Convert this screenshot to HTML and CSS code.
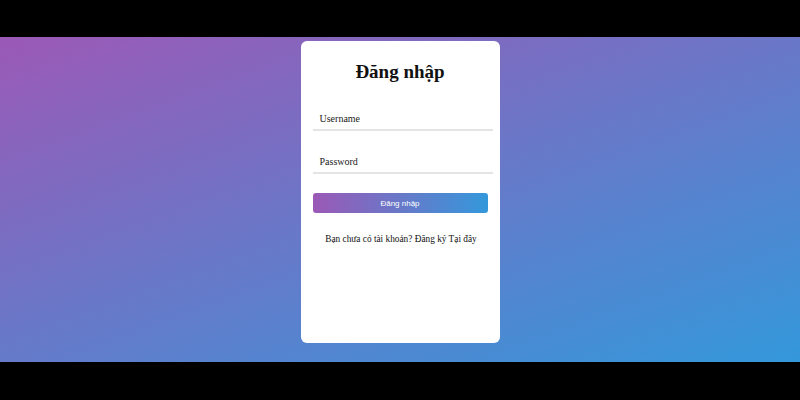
FILE: index.html
```html
<!DOCTYPE html>
<html lang="vi">
<head>
<meta charset="utf-8">
<title>Đăng nhập</title>
<link rel="stylesheet" href="styles.css">
</head>
<body>
<div class="frame">
  <div class="stage">
    <div class="card">
      <h1 class="title">Đăng nhập</h1>
      <div class="field"><span class="label">Username</span></div>
      <div class="field"><span class="label">Password</span></div>
      <button class="btn">Đăng nhập</button>
      <p class="foot">Bạn chưa có tài khoản? Đăng ký <a class="link">Tại đây</a></p>
    </div>
  </div>
</div>
</body>
</html>
```
FILE: styles.css
```css
html, body {
  margin: 0;
  padding: 0;
  background: #000;
  width: 800px;
  height: 400px;
  overflow: hidden;
}
.frame {
  padding-top: 37px;
}
.stage {
  height: 325px;
  background: linear-gradient(160deg, #9b59b6 0%, #3498db 100%);
  display: flex;
  justify-content: center;
  align-items: flex-start;
  padding-top: 4px;
  box-sizing: border-box;
}
.card {
  width: 199px;
  height: 302px;
  background: #fff;
  border-radius: 6px;
  box-sizing: border-box;
  padding: 0 12px;
  font-family: "Liberation Serif", "Times New Roman", serif;
  color: #111;
}
.title {
  margin: 20px 0 0;
  font-size: 19px;
  line-height: 22px;
  text-align: center;
  font-weight: bold;
}
.field {
  height: 24px;
  border-bottom: 2px solid #e4e4e4;
  box-sizing: border-box;
  margin-right: -5px;
  padding-left: 7px;
  display: flex;
  align-items: center;
}
.field:first-of-type { margin-top: 24px; }
.field + .field { margin-top: 19px; }
.label {
  font-size: 10px;
  color: #222;
}
.btn {
  display: block;
  width: 175px;
  height: 20px;
  margin-top: 19px;
  border: none;
  border-radius: 3px;
  background: linear-gradient(90deg, #9b59b6, #3498db);
  color: #fff;
  font-family: "Liberation Sans", Arial, sans-serif;
  font-size: 8px;
  padding: 0;
}
.foot {
  margin: 20px 0 0;
  font-size: 9.3px;
  line-height: 12px;
  text-align: center;
  padding-left: 2px;
}
.link {
  color: #111;
}
```
